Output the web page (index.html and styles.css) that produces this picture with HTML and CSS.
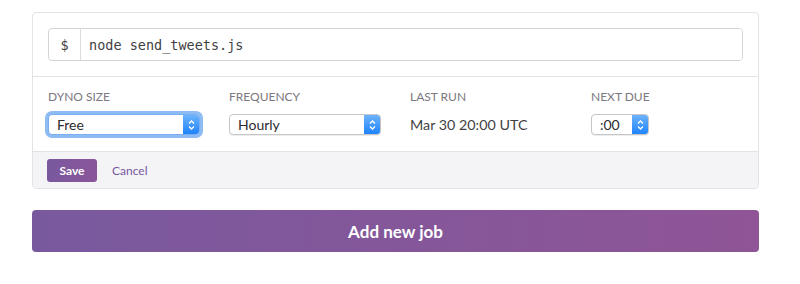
FILE: index.html
```html
<!DOCTYPE html>
<html lang="en">
<head>
    <meta charset="UTF-8">
    <meta name="viewport" content="width=device-width, initial-scale=1.0">
    <title>Scheduler Job</title>
    <link rel="stylesheet" href="styles.css">
</head>
<body>
    <div class="page">
        <div class="job-card">
            <div class="command">
                <div class="command-input">
                    <span class="prompt">$</span>
                    <span class="command-text" contenteditable="true">node send_tweets.js</span>
                </div>
            </div>

            <div class="fields">
                <div class="field">
                    <label>Dyno Size</label>
                    <div class="select select-wide focused">
                        <select>
                            <option>Free</option>
                        </select>
                        <span class="stepper">
                            <svg width="7" height="12" viewBox="0 0 7 12"><path d="M1 4.5 L3.5 2 L6 4.5 M1 7.5 L3.5 10 L6 7.5" fill="none" stroke="#fff" stroke-width="1.3"/></svg>
                        </span>
                    </div>
                </div>
                <div class="field">
                    <label>Frequency</label>
                    <div class="select select-wide">
                        <select>
                            <option>Hourly</option>
                        </select>
                        <span class="stepper">
                            <svg width="7" height="12" viewBox="0 0 7 12"><path d="M1 4.5 L3.5 2 L6 4.5 M1 7.5 L3.5 10 L6 7.5" fill="none" stroke="#fff" stroke-width="1.3"/></svg>
                        </span>
                    </div>
                </div>
                <div class="field">
                    <label>Last Run</label>
                    <div class="last-run">Mar 30 20:00 UTC</div>
                </div>
                <div class="field">
                    <label>Next Due</label>
                    <div class="select select-small">
                        <select>
                            <option>:00</option>
                        </select>
                        <span class="stepper">
                            <svg width="7" height="12" viewBox="0 0 7 12"><path d="M1 4.5 L3.5 2 L6 4.5 M1 7.5 L3.5 10 L6 7.5" fill="none" stroke="#fff" stroke-width="1.3"/></svg>
                        </span>
                    </div>
                </div>
            </div>

            <div class="actions">
                <button class="save-btn">Save</button>
                <button class="cancel-btn">Cancel</button>
            </div>
        </div>

        <button class="add-job">Add new job</button>
    </div>
</body>
</html>
```

FILE: styles.css
```css
* {
    margin: 0;
    padding: 0;
    box-sizing: border-box;
}
body {
    font-family: Lato, "Open Sans", sans-serif;
    background-color: #fff;
    color: #3f3f44;
}
.page {
    padding: 12px 41px 0 32px;
}
.job-card {
    border: 1px solid #e3e3e7;
    border-radius: 4px;
    overflow: hidden;
}
.command {
    padding: 15px 15px 15px 15px;
    border-bottom: 1px solid #e3e3e7;
}
.command-input {
    display: flex;
    height: 33px;
    border: 1px solid #d4d4d9;
    border-radius: 4px;
    overflow: hidden;
}
.prompt {
    width: 32px;
    display: flex;
    align-items: center;
    justify-content: center;
    border-right: 1px solid #dcdce0;
    font-family: "DejaVu Sans Mono", monospace;
    font-size: 13.5px;
    color: #3f3f44;
}
.command-text {
    flex: 1;
    display: flex;
    align-items: center;
    outline: none;
    padding: 0 8px;
    font-family: "DejaVu Sans Mono", monospace;
    font-size: 13.5px;
    color: #3f3f44;
    background: #fff;
}
.fields {
    display: grid;
    grid-template-columns: 181px 181px 181px 181px;
    padding: 12px 15px 16px 15px;
}
.field label {
    display: block;
    font-size: 12px;
    line-height: 16px;
    text-transform: uppercase;
    color: #7b7880;
    margin-bottom: 9px;
}
.select {
    display: flex;
    height: 21px;
    border: 1px solid #c6c6c9;
    border-radius: 4px;
    background: #fff;
    overflow: hidden;
    box-shadow: 0 1px 1px rgba(0, 0, 0, 0.08);
}
.select-wide {
    width: 152px;
}
.select-small {
    width: 58px;
}
.select.focused {
    box-shadow: 0 0 0 3px #8dbcf4;
    border-color: #7aaef0;
}
.select select {
    flex: 1;
    min-width: 0;
    appearance: none;
    -webkit-appearance: none;
    border: none;
    outline: none;
    background: transparent;
    font-family: Lato, "Open Sans", sans-serif;
    font-size: 14px;
    color: #2b2b2e;
    padding: 0 8px;
}
.stepper {
    width: 16px;
    display: flex;
    align-items: center;
    justify-content: center;
    background: linear-gradient(#6db3fb, #1f84fb);
}
.last-run {
    font-size: 14.3px;
    line-height: 21px;
    color: #3f3f44;
}
.actions {
    display: flex;
    align-items: center;
    gap: 15px;
    height: 37px;
    padding: 0 14px;
    background-color: #f4f4f7;
    border-top: 1px solid #e3e3e7;
}
.save-btn {
    width: 50px;
    height: 23px;
    border: none;
    border-radius: 3px;
    background: linear-gradient(90deg, #79589f, #8a569a);
    color: #fff;
    font-family: Lato, "Open Sans", sans-serif;
    font-weight: bold;
    font-size: 12px;
    cursor: pointer;
}
.cancel-btn {
    background: none;
    border: none;
    color: #79589f;
    font-family: Lato, "Open Sans", sans-serif;
    font-size: 12px;
    cursor: pointer;
}
.add-job {
    display: block;
    width: 100%;
    height: 42px;
    margin-top: 21px;
    border: none;
    border-radius: 4px;
    background: linear-gradient(90deg, #79599e, #8f5596);
    color: #fff;
    font-family: Lato, "Open Sans", sans-serif;
    font-size: 17px;
    font-weight: bold;
    cursor: pointer;
}
```
